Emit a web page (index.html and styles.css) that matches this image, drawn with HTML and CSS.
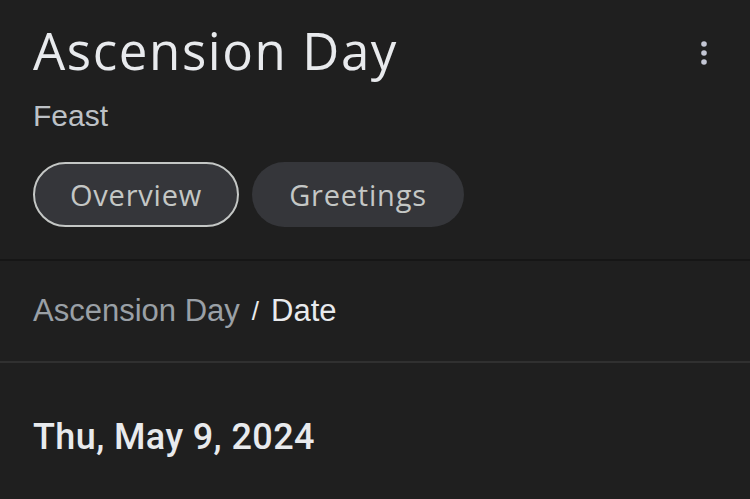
FILE: index.html
```html
<!DOCTYPE html>
<html>
<head>
<meta charset="utf-8">
<link rel="stylesheet" href="styles.css">
</head>
<body>
<div class="page">
  <header class="head">
    <div class="head-top">
      <h1 class="title">Ascension Day</h1>
      <button class="more" aria-label="More options">
        <svg width="8" height="26" viewBox="0 0 8 26"><circle cx="4" cy="4" r="2.8"/><circle cx="4" cy="13" r="2.8"/><circle cx="4" cy="22" r="2.8"/></svg>
      </button>
    </div>
    <div class="subtitle">Feast</div>
    <nav class="chips">
      <span class="chip chip-active">Overview</span>
      <span class="chip">Greetings</span>
    </nav>
  </header>
  <div class="crumbs">
    <span class="crumb-parent">Ascension Day</span>
    <span class="crumb-sep">/</span>
    <span class="crumb-cur">Date</span>
  </div>
  <div class="answer">Thu, May 9, 2024</div>
</div>
</body>
</html>
```
FILE: styles.css
```css
html, body {
  margin: 0;
  padding: 0;
  background: #1f1f1f;
}
body {
  width: 750px;
  height: 499px;
  overflow: hidden;
  font-family: "Liberation Sans", Arial, sans-serif;
}
.head {
  padding: 20px 0 0 33px;
  border-bottom: 2px solid #161616;
  height: 261px;
  box-sizing: border-box;
}
.head-top {
  display: flex;
  align-items: flex-start;
  justify-content: space-between;
  padding-right: 42px;
}
.title {
  margin: 0;
  font-family: "Open Sans", sans-serif;
  font-weight: 400;
  font-size: 51px;
  line-height: 60px;
  color: #e8eaed;
  letter-spacing: 1.6px;
}
.more {
  background: none;
  border: 0;
  padding: 0;
  margin-top: 20px;
  width: 8px;
  height: 26px;
  fill: #c4c7d5;
}
.more svg { display: block; }
.subtitle {
  margin-top: 18px;
  font-size: 30px;
  line-height: 36px;
  color: #bdc1c6;
}
.chips {
  display: flex;
  gap: 13px;
  margin-top: 28px;
}
.chip {
  box-sizing: border-box;
  height: 65px;
  display: flex;
  align-items: center;
  justify-content: center;
  border-radius: 33px;
  background: #35363a;
  color: #c4c7c5;
  font-family: "Open Sans", sans-serif;
  font-size: 29px;
  letter-spacing: 0.8px;
}
.chip-active {
  border: 2px solid #c4c7c5;
  width: 206px;
}
.chip:not(.chip-active) { width: 212px; }
.crumbs {
  height: 102px;
  box-sizing: border-box;
  border-bottom: 2px solid #303030;
  padding: 0 0 0 33px;
  display: flex;
  align-items: center;
  font-size: 31px;
}
.crumb-parent { color: #9aa0a6; }
.crumb-sep { color: #e8eaed; margin: 0 12px; font-size: 26px; }
.crumb-cur { color: #e8eaed; }
.answer {
  padding: 54px 0 0 33px;
  font-family: Roboto, "Liberation Sans", sans-serif;
  font-size: 36px;
  font-weight: 500;
  letter-spacing: 0.4px;
  line-height: 40px;
  color: #e8eaed;
}
```
